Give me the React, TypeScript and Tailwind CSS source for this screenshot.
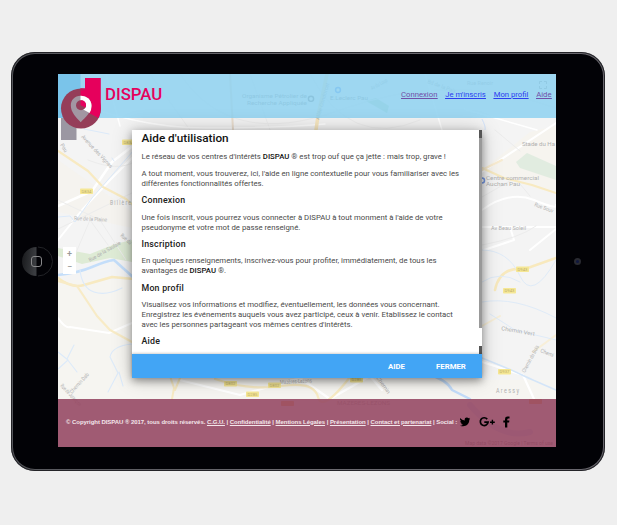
import type { ReactNode } from "react";

function Road({ d, color = "#ffffff", width = 1.5 }: { d: string; color?: string; width?: number }) {
  return <path d={d} fill="none" stroke={color} strokeWidth={width} strokeLinecap="round" strokeLinejoin="round" />;
}

function Label({ x, y, size = 5.5, rotate = 0, length, color = "#b0b0b0", children }: { x: number; y: number; size?: number; rotate?: number; length?: number; color?: string; children: string }) {
  return (
    <text x={x} y={y} fontSize={size} fill={color} textLength={length} lengthAdjust="spacingAndGlyphs" transform={`rotate(${rotate} ${x} ${y})`}>
      {children}
    </text>
  );
}

const shields = [
  { x: 122, y: 139.5, t: "D834" },
  { x: 80, y: 188.5, t: "D834" },
  { x: 516, y: 266.5, t: "D943" },
  { x: 503, y: 288, t: "D943" },
  { x: 498, y: 369, t: "D937" },
  { x: 224, y: 381, t: "D802" },
  { x: 268, y: 382.5, t: "D802" },
  { x: 246, y: 391.5, t: "D285" },
  { x: 350, y: 377, t: "D285" },
];

const hiddenShields = [
  { x: 281, y: 401 },
  { x: 529, y: 399 },
];

function CityMap() {
  return (
    <svg className="absolute inset-0 h-full w-full font-['Roboto',sans-serif]" viewBox="58 74 498 373" preserveAspectRatio="none">
      <rect x="58" y="74" width="498" height="373" fill="#f4f4f4" />
      <path d="M58 280H132L150 380H556V447H58Z" fill="#f6f5f1" />
      <path d="M58 160L132 212V228L58 212Z" fill="#f5f3ef" />
      <path d="M482 170L530 132L556 126V192L540 190Z" fill="#f6f4ef" />
      <path d="M516 162L527 153L556 166V180L520 168Z" fill="#e1ece0" />
      <path d="M58 248L90 254L115 244L132 240V262L110 258L82 264L58 256Z" fill="#deebd5" />
      <path d="M366 101l10-3 13 8-2 7z" fill="#c3dfc4" />
      <g>
        <Road d="M58 240L82 210L110 180L134 156" width={2} />
        <Road d="M58 206L92 191L112 162L134 145" width={2.5} />
        <Road d="M88 160Q118 172 134 162M58 229L134 192M75 255L90 220L108 245M58 200L100 220L126 260" color="#ececec" width={1} />
        <Road d="M180 74Q230 150 340 110T556 108M150 74L190 130M250 74L270 130M310 74Q350 150 420 120" color="#ededed" width={1} />
        <Road d="M58 94Q130 128 205 128T325 124M106 74L120 126M425 74L442 130M464 109L537 130" width={1.5} />
        <Road d="M482 172L556 123M482 227H556M482 210Q510 190 534 200T556 205M510 227L514 240L484 250M530 250L556 229" width={2} />
        <Road d="M482 197L515 178L530 196M495 130L520 151M482 245Q520 238 536 226" color="#ececec" width={1} />
        <Road d="M58 318Q66 329 70 327L109 333L132 323" width={2} />
        <Road d="M180 380L240 395L300 378L330 399L370 376L382 390M482 362L523 375L534 399" width={2.2} />
      </g>
      <g opacity="0.9">
        <Road d="M58 151L88 171L103 187L126 199L134 206" color="#f9e9bc" width={2.2} />
        <Road d="M482 168L504 178L532 185L556 193" color="#f9e9bc" width={2} />
        <Road d="M482 170L502 160" color="#f9ebcd" width={2} />
        <Road d="M58 278Q72 289 84 285L112 277L134 279" color="#f9e9bc" width={2.5} />
        <Road d="M58 281L77 286L97 316L110 330L132 342" color="#f9ebc2" width={2.2} />
        <Road d="M170 376L174 388L172 399M180 378L175 390" color="#f9ebc0" width={2} />
        <Road d="M215 379Q250 391 282 386T318 397T350 377" color="#f9ebc0" width={2.2} />
        <Road d="M556 258L525 269Q500 266 495 290" color="#f9e8b8" width={2.5} />
        <Road d="M482 326L500 316M533 352L556 335" color="#f9efd6" width={2} />
        <Road d="M327 74L318 116L316 130" color="#f8e6bb" width={3.5} />
        <Road d="M230 74L233 130" color="#e9dccc" width={2} />
      </g>
      <g>
        <Road d="M58 275Q78 273 92 267T114 260L134 278" color="#c4defa" width={2.6} />
        <Road d="M58 217L70 216L75 222L92 198L134 150M84 129L109 134M112 158L114 161" color="#dceafa" width={1} />
        <Road d="M80 270Q82 288 94 292T122 288M58 369L68 360L58 352M74 345L67 359L77 372M132 344Q112 346 110 357L118 373L108 392M119 372L123 386" color="#dceafa" width={1.1} />
        <Road d="M482 250Q508 250 520 276T556 260M482 282Q500 270 520 282M482 302Q515 296 556 318M490 314L515 330L556 340" color="#dfebf8" width={1} />
        <Road d="M428 374Q447 380 452 390L470 399" color="#c2dcfa" width={2.5} />
        <Road d="M470 405Q500 440 530 432" color="#d3dcf0" width={6} />
        <Road d="M482 358Q512 370 520 374T556 390" color="#d4e5f8" width={1.5} />
        <path d="M482 119Q486 127 485 130" fill="none" stroke="#d2e3fb" />
      </g>
      <g>
        <Label x={81} y={137} rotate={47} length={43}>Avenue des Vignes</Label>
        <Label x={60} y={145} rotate={58} length={9}>Pau</Label>
        <Label x={110} y={205} size={6.5} length={21}>B i l l è r e</Label>
        <Label x={74} y={220} rotate={3} length={33}>Rue de la Plaine</Label>
        <Label x={90} y={262} rotate={-30} length={36}>Rue de la Saulaie</Label>
        <Label x={120} y={236} rotate={42} length={13}>Rue du</Label>
        <Label x={72} y={394} rotate={-48} length={26}>Chemin Dab</Label>
        <Label x={60} y={386} rotate={47} length={28}>Rue de Jurançon</Label>
        <Label x={242} y={98} size={5.8} length={65} color="#8f8f8f">Organisme Pétrolier de</Label>
        <Label x={247} y={104.5} size={5.8} length={60} color="#8f8f8f">Recherche Appliquée</Label>
        <Label x={330} y={99.5} size={5.8} length={38} color="#8f8f8f">E.Leclerc Pau</Label>
        <Label x={319} y={120} rotate={-74} length={38}>Allée Condorcet</Label>
        <Label x={372} y={90} rotate={-28} length={18}>Av du Loup</Label>
        <Label x={427} y={83} rotate={20} length={30}>Bd de la Paix</Label>
        <Label x={467} y={85} length={26}>Rue Renoir</Label>
        <Label x={522} y={146} size={5.8} length={33}>Stade du Ha</Label>
        <Label x={486} y={179.5} size={5.8} length={53}>Centre commercial</Label>
        <Label x={486} y={185.5} size={5.8} length={34}>Auchan Pau</Label>
        <Label x={491} y={229.5} length={35}>Av Beau Soleil</Label>
        <Label x={534} y={206} rotate={20} length={20}>Rue Souv</Label>
        <Label x={501} y={330} rotate={10} length={34}>Chemin Vert</Label>
        <Label x={525} y={373} rotate={-62} length={30}>Chemin du Bois</Label>
        <Label x={540} y={352} rotate={22} length={14}>Chemi</Label>
        <Label x={496} y={393} size={6.5} length={23}>A r e s s y</Label>
        <Label x={280} y={384} rotate={-3} length={32}>Mazères-Lezons</Label>
        <Label x={337} y={405} size={6} length={53}>MAZERES-LEZONS</Label>
        <Label x={376} y={378} rotate={54} length={20}>Chemin</Label>
        <Label x={465} y={444.5} size={5.3} length={88} color="#777777">Map data ©2017 Google | Terms of use</Label>
      </g>
      <circle cx="304" cy="98.8" r="0" />
      <circle cx="311" cy="98.8" r="2.6" fill="none" stroke="#777" strokeWidth="1.4" />
      <circle cx="338" cy="90" r="2.4" fill="none" stroke="#5a94f4" strokeWidth="1.5" />
      <circle cx="482" cy="180.5" r="2.5" fill="none" stroke="#7597e3" strokeWidth="1.5" />
      {shields.map((s) => (
        <g key={`${s.x}-${s.y}`}>
          <rect x={s.x} y={s.y} width="13" height="5.5" rx="0.8" fill="#f5e795" />
          <text x={s.x + 6.5} y={s.y + 4.3} fontSize="4.2" textAnchor="middle" fill="#bdae6c">{s.t}</text>
        </g>
      ))}
      {hiddenShields.map((s) => (
        <rect key={s.x} x={s.x} y={s.y} width="13" height="5" rx="0.8" fill="#f2b36a" />
      ))}
      <path d="M539.5 84v-2.500h2.500M544 81.500h2.500v2.500M539.5 86v2.500h2.500M544 88.500h2.500v-2.500" fill="none" stroke="#8d8d8d" strokeWidth="0.8" />
    </svg>
  );
}

function Logo() {
  return (
    <svg className="absolute top-0 left-0 h-[68px] w-[46px]" viewBox="58 74 46 68">
      <rect x="58" y="74" width="22.5" height="44" fill="#7ac4ea" />
      <rect x="61" y="118" width="15.5" height="22" fill="#9b97a2" />
      <circle cx="81" cy="108.5" r="20" fill="#953d59" />
      <path d="M80.500 108.5V88.500H85V78H100.800V108.5Q100.800 113 98.500 118Z" fill="#e6005c" />
      <path d="M80.500 88.500H85V90L80.500 91Z" fill="#c41c5b" />
      <path d="M80.700 95.800C74.500 95.800 70.800 100.300 70.800 105.600C70.800 112 76 117.500 80.700 122.200C85.600 117.500 91.500 112 91.500 105.600C91.500 100 87 95.800 80.700 95.800Z" fill="#a297a2" />
      <path d="M80.500 95.800C87 95.800 91.500 100 91.500 106Q91.500 110 89.600 113L80.500 108Z" fill="#fff" />
      <circle cx="81" cy="105.2" r="5" fill="#953d59" />
      <path d="M80.500 105.2V100.2H81A5 5 0 0 1 85.500 107.500Z" fill="#e6005c" />
    </svg>
  );
}

function Heading({ children }: { children: ReactNode }) {
  return <h3 className="mt-[7px] h-[11px] text-[8.8px] leading-[11px] font-medium tracking-[0.22px] text-[#202020]">{children}</h3>;
}

function Paragraph({ children, className }: { children: ReactNode; className: string }) {
  return <p className={`text-[7.77px] leading-[9.8px] whitespace-nowrap text-[#4a4a4a] ${className}`}>{children}</p>;
}

function HelpDialog() {
  return (
    <section className="relative mt-[12px] ml-[74px] flex h-[248px] w-[350px] flex-col bg-white font-['Roboto',sans-serif] shadow-[0_3px_8px_rgba(0,0,0,0.38),0_0_20px_rgba(0,0,0,0.2)]">
      <div className="flex h-[224px] overflow-hidden">
        <div className="w-[347px] pl-[9.5px]">
          <h2 className="mt-[2px] h-[13px] text-[11.75px] leading-[13px] font-medium text-[#111]">Aide d'utilisation</h2>
          <Paragraph className="mt-[7px]">Le réseau de vos centres d'intérêts <b className="font-medium text-[#111]">DISPAU</b> ® est trop ouf que ça jette : mais trop, grave !</Paragraph>
          <Paragraph className="mt-[7px]">A tout moment, vous trouverez, ici, l'aide en ligne contextuelle pour vous familiariser avec les<br />différentes fonctionnalités offertes.</Paragraph>
          <Heading>Connexion</Heading>
          <Paragraph className="mt-[6.5px]">Une fois inscrit, vous pourrez vous connecter à DISPAU à tout monment à l'aide de votre<br />pseudonyme et votre mot de passe renseigné.</Paragraph>
          <Heading>Inscription</Heading>
          <Paragraph className="mt-[6px]">En quelques renseignements, inscrivez-vous pour profiter, immédiatement, de tous les<br />avantages de <b className="font-medium text-[#111]">DISPAU</b> ®.</Paragraph>
          <Heading>Mon profil</Heading>
          <Paragraph className="mt-[6px]">Visualisez vos informations et modifiez, éventuellement, les données vous concernant.<br />Enregistrez les événements auquels vous avez participé, ceux à venir. Etablissez le contact<br />avec les personnes partageant vos mêmes centres d'intérêts.</Paragraph>
          <Heading>Aide</Heading>
        </div>
        <div className="flex w-[3px] flex-col bg-[#999]">
          <div className="h-[8px] bg-[#555]" />
          <div className="mt-[190px] h-[18px] bg-white" />
          <div className="h-[8px] bg-[#555]" />
        </div>
      </div>
      <footer className="flex h-[24px] items-center bg-[#42a5f5] pt-[1px] pl-[256px] text-[7.8px] font-bold text-white shadow-[0_-1px_2px_rgba(0,0,0,0.18)]">
        <span className="w-[48px]">AIDE</span>
        <span>FERMER</span>
      </footer>
    </section>
  );
}

function SiteFooter() {
  return (
    <footer className="relative mt-[21px] flex h-[48px] items-center bg-[#944661]/88 pl-[8px] font-['Liberation_Sans',sans-serif] text-[6px] font-bold tracking-[-0.052px] whitespace-pre text-[#f3e6ea]">
      <div className="w-[391px] pb-[2px]">
        © Copyright DISPAU ® 2017, tous droits réservés.{" "}
        <u>C.G.U.</u> | <u>Confidentialité</u> | <u>Mentions Légales</u> | <u>Présentation</u> | <u>Contact et partenariat</u> | Social :
      </div>
      <svg className="mb-[3px] ml-[2px] h-[12px] w-[52px]" viewBox="459 415.5 52 12">
        <path d="M460 417.6Q462 420 464.7 420Q464.3 417.2 466.8 417Q468 417 468.7 417.7L470 417.2L469.2 418.5L470.2 418.2L469.3 419.3C469.3 424.5 465 427 460 425.2Q462 425.2 463 424.3Q461.3 424 461 422.8H462Q460.2 422 460.2 420.4L461.2 420.7Q459.6 419.4 460 417.6Z" fill="#000" />
        <path d="M487.2 418.6A3.9 3.9 0 1 0 488.1 421.7H484.3" fill="none" stroke="#000" strokeWidth="1.7" />
        <path d="M492.4 419.3v4.8M490 421.7h4.8" stroke="#000" strokeWidth="1.4" />
        <path d="M505 427v-5h-1.700v-2h1.700v-1.600Q505 416 507.500 416H509.500V418H508.200Q507.300 418 507.300 419V420H509.400L509.100 422H507.300V427Z" fill="#000" />
      </svg>
    </footer>
  );
}

function Screen() {
  return (
    <main className="relative h-[373px] w-[498px] overflow-hidden">
      <CityMap />
      <header className="relative flex h-[44px] bg-[#8ed1f0]/85 font-['Roboto',sans-serif]">
        <Logo />
        <h1 className="mt-[10px] ml-[47px] w-[296px] text-[16.8px] leading-[20px] font-medium text-[#e6005c]">DISPAU</h1>
        <nav className="mt-[15px] flex h-[11px] gap-[7.8px] text-[7.72px] leading-[11px] whitespace-nowrap text-[#2b3df0] underline">
          <a className="text-[#7150a8]">Connexion</a>
          <a>Je m'inscris</a>
          <a>Mon profil</a>
          <a className="text-[#7150a8]">Aide</a>
        </nav>
      </header>
      <HelpDialog />
      <SiteFooter />
      <div className="absolute top-[173px] left-[5px] flex h-[27px] w-[13px] flex-col items-center justify-around bg-white font-['Roboto',sans-serif] text-[9px] leading-[12px] font-medium text-[#999]">
        <span>+</span>
        <span>−</span>
      </div>
    </main>
  );
}

export default function App() {
  return (
    <div className="h-[525px] w-[617px] overflow-hidden bg-[#efefef] pt-[52px] pl-[11px]">
      <div className="h-[419px] w-[594px] rounded-[24px] bg-linear-to-r from-[#55565b] via-[#6b696f] to-[#68666d] p-[2px] shadow-[inset_0_0_0_1px_#242428]">
        <div className="flex h-full w-full items-start rounded-[22px] bg-[#020206] pt-[20px]">
          <div className="flex h-[375px] w-[45px] items-center pl-[9px]">
            <svg className="h-[31px] w-[31px]" viewBox="0 0 31 31">
              <defs>
                <linearGradient id="home" x1="0" x2="1" y1="0" y2="0.2">
                  <stop offset="0" stopColor="#17181b" />
                  <stop offset="1" stopColor="#3b3d41" />
                </linearGradient>
              </defs>
              <path d="M14.5 1A14.5 14.5 0 0 0 14.5 30Z" fill="url(#home)" />
              <path d="M16 1A14.5 14.5 0 0 1 16 30" fill="none" stroke="#222327" strokeWidth="1" />
              <rect x="9.5" y="10.5" width="10" height="10" rx="2.5" fill="none" stroke="#88888a" strokeWidth="1" />
            </svg>
          </div>
          <Screen />
          <div className="flex h-[375px] w-[47px] items-center pl-[18px]">
            <div className="flex h-[7px] w-[7px] items-center justify-center rounded-full bg-[#292a31]">
              <div className="h-[3px] w-[3px] rounded-full bg-[#10183f]" />
            </div>
          </div>
        </div>
      </div>
    </div>
  );
}
